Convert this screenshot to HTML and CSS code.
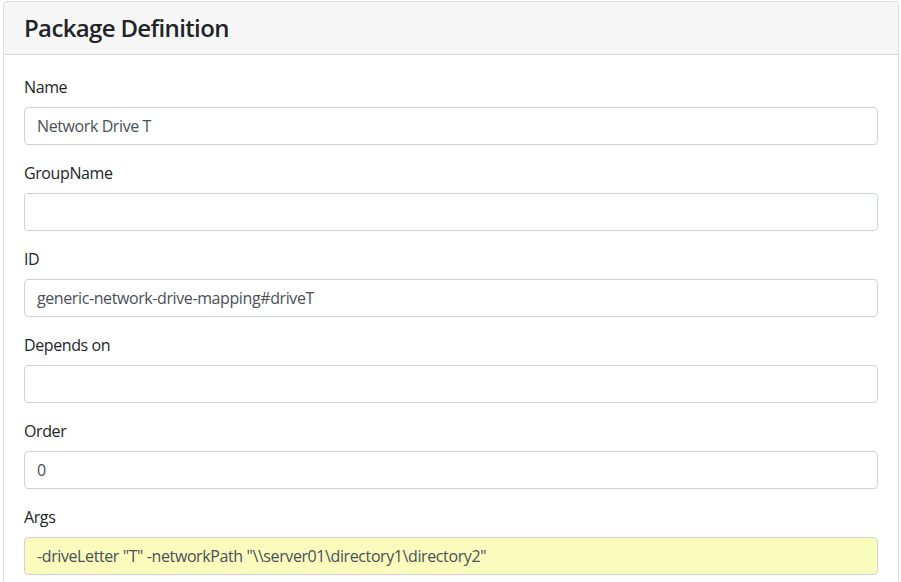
FILE: index.html
```html
<!DOCTYPE html>
<html lang="en">
<head>
<meta charset="utf-8">
<title>Package Definition</title>
<link rel="stylesheet" href="styles.css">
</head>
<body>
<div class="card">
  <div class="card-header">
    <h3 class="card-title">Package Definition</h3>
  </div>
  <div class="card-body">
    <div class="form-group">
      <label class="form-label">Name</label>
      <div class="form-control">Network Drive T</div>
    </div>
    <div class="form-group">
      <label class="form-label">GroupName</label>
      <div class="form-control"></div>
    </div>
    <div class="form-group">
      <label class="form-label">ID</label>
      <div class="form-control">generic-network-drive-mapping#driveT</div>
    </div>
    <div class="form-group">
      <label class="form-label">Depends on</label>
      <div class="form-control"></div>
    </div>
    <div class="form-group">
      <label class="form-label">Order</label>
      <div class="form-control">0</div>
    </div>
    <div class="form-group">
      <label class="form-label">Args</label>
      <div class="form-control form-control-highlight">-driveLetter "T" -networkPath "\\server01\directory1\directory2"</div>
    </div>
  </div>
</div>
</body>
</html>
```

FILE: styles.css
```css
* { box-sizing: border-box; }
html, body { margin: 0; padding: 0; background: #fff; }
body {
  font-family: "Open Sans", "Noto Sans", sans-serif;
  font-size: 16px;
  line-height: 1.5;
  letter-spacing: -0.4px;
  color: #212529;
  padding: 1px 2px 0 3px;
}
.card {
  border: 1px solid rgba(0,0,0,.125);
  border-radius: 4px;
  background: #fff;
  width: 896px;
  overflow: hidden;
}
.card-header {
  background: #f7f7f7;
  border-bottom: 1px solid rgba(0,0,0,.125);
  padding: 12px 20px;
}
.card-title {
  margin: 0;
  font-size: 24px;
  font-weight: 600;
  line-height: 28px;
  letter-spacing: -0.65px;
}
.card-body {
  padding: 20px 20px 0 20px;
}
.form-group {
  display: flex;
  flex-direction: column;
  margin-bottom: 16px;
}
.form-label {
  display: block;
  margin-bottom: 8px;
}
.form-control {
  height: 38px;
  padding: 6px 12px;
  border: 1px solid #ced4da;
  border-radius: 4px;
  color: #495057;
  background: #fff;
  white-space: nowrap;
}
.form-control-highlight {
  background: #fafcbe;
}
```
